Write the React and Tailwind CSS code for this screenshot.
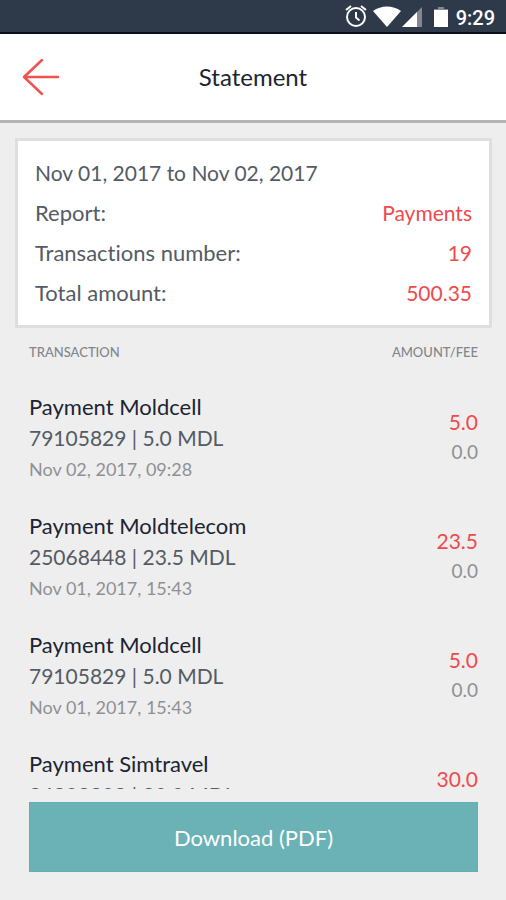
import React from "react";

const summary = [
  { label: "Report:", value: "Payments" },
  { label: "Transactions number:", value: "19" },
  { label: "Total amount:", value: "500.35" },
];

const transactions = [
  {
    id: 1,
    title: "Payment Moldcell",
    details: "79105829 | 5.0 MDL",
    date: "Nov 02, 2017, 09:28",
    amount: "5.0",
    fee: "0.0",
  },
  {
    id: 2,
    title: "Payment Moldtelecom",
    details: "25068448 | 23.5 MDL",
    date: "Nov 01, 2017, 15:43",
    amount: "23.5",
    fee: "0.0",
  },
  {
    id: 3,
    title: "Payment Moldcell",
    details: "79105829 | 5.0 MDL",
    date: "Nov 01, 2017, 15:43",
    amount: "5.0",
    fee: "0.0",
  },
  {
    id: 4,
    title: "Payment Simtravel",
    details: "24203808 | 30.0 MDL",
    date: "Nov 01, 2017, 15:40",
    amount: "30.0",
    fee: "0.0",
  },
];

const StatusBar = () => (
  <div className="flex h-[34px] shrink-0 items-center justify-end border-b-2 border-[#0b0f17] bg-[#2e3a4a] pr-[11px] text-white">
    {/* Alarm */}
    <svg width="22" height="22" viewBox="0 0 22 22" fill="none" stroke="currentColor" strokeWidth="2">
      <circle cx="11" cy="12" r="9" />
      <path d="M11 7v5.5l3.5 3" />
      <path d="M1 5l5-4M21 5l-5-4" />
    </svg>
    {/* Wifi */}
    <svg className="ml-[6px]" width="28" height="22" viewBox="0 0 28 22" fill="currentColor">
      <path d="M14 22L0 6C8 0 20 0 28 6z" />
    </svg>
    {/* Signal */}
    <svg className="ml-px" width="20" height="22" viewBox="0 0 20 22" fill="currentColor">
      <path d="M20 2v20H0z" opacity="0.4" />
      <path d="M15 7v15H0z" />
    </svg>
    {/* Battery */}
    <svg className="ml-3" width="14" height="22" viewBox="0 0 14 22" fill="currentColor">
      <path d="M4 2h6v2h4v3H0V4h4z" opacity="0.4" />
      <path d="M0 5h14v17H0z" />
    </svg>
    <span className="ml-2 pt-1 font-['Roboto',sans-serif] text-[20px] font-medium leading-6">9:29</span>
  </div>
);

const App = () => {
  return (
    <div className="flex h-screen flex-col bg-[#eeeeee] font-['Lato',sans-serif] text-[22px] text-[#545b64] [font-variant-ligatures:none]">
      <StatusBar />

      {/* Header */}
      <header className="grid shrink-0 grid-cols-[40px_1fr_40px] items-center border-b-[3px] border-[#b4b4b4] bg-white px-5 py-6">
        <button type="button" aria-label="Back" className="text-[#ef5350]">
          <svg width="40" height="38" viewBox="0 0 40 38" fill="none" stroke="currentColor" strokeWidth="2.5" strokeLinecap="round" strokeLinejoin="round">
            <path d="M22 2L4 19l18 17M4 19h34" />
          </svg>
        </button>
        <h1 className="text-center text-[24px] leading-7 text-[#1c2433]">Statement</h1>
      </header>

      {/* Summary */}
      <section className="ml-[15px] mr-[14px] mt-[15px] shrink-0 border-[3px] border-[#dedede] bg-white px-[17px] py-3 leading-10">
        <p className="text-[21px] leading-10">Nov 01, 2017 to Nov 02, 2017</p>
        <dl>
          {summary.map((item) => (
            <div key={item.label} className="flex justify-between">
              <dt>{item.label}</dt>
              <dd className="text-[21px] leading-10 text-[#ef4a4c]">{item.value}</dd>
            </div>
          ))}
        </dl>
      </section>

      <div className="ml-[29px] mr-7 mt-4 flex shrink-0 justify-between text-[13px] font-medium leading-4 text-[#83868a]">
        <span>TRANSACTION</span>
        <span>AMOUNT/FEE</span>
      </div>

      {/* Transactions */}
      <ul className="ml-[29px] mr-7 mt-8 min-h-0 flex-1 overflow-y-auto [scrollbar-width:none]">
        {transactions.map((item) => (
          <li key={item.id} className="flex justify-between pb-[27px]">
            <div>
              <h2 className="leading-[30px] text-[#1c2433]">{item.title}</h2>
              <p className="text-[21px] leading-8">{item.details}</p>
              <p className="text-[18px] leading-[30px] text-[#8e9194]">{item.date}</p>
            </div>
            <div className="pt-[15px] text-right">
              <p className="text-[21px] leading-[30px] text-[#ef4a4c]">{item.amount}</p>
              <p className="text-[19px] leading-[30px] text-[#8e9194]">{item.fee}</p>
            </div>
          </li>
        ))}
      </ul>

      <footer className="shrink-0 pb-7 pl-[29px] pr-7 pt-[13px]">
        <button type="button" className="h-[70px] w-full border border-[#5fb0b2] bg-[#6bb2b7] text-white">
          Download (PDF)
        </button>
      </footer>
    </div>
  );
};

export default App;
